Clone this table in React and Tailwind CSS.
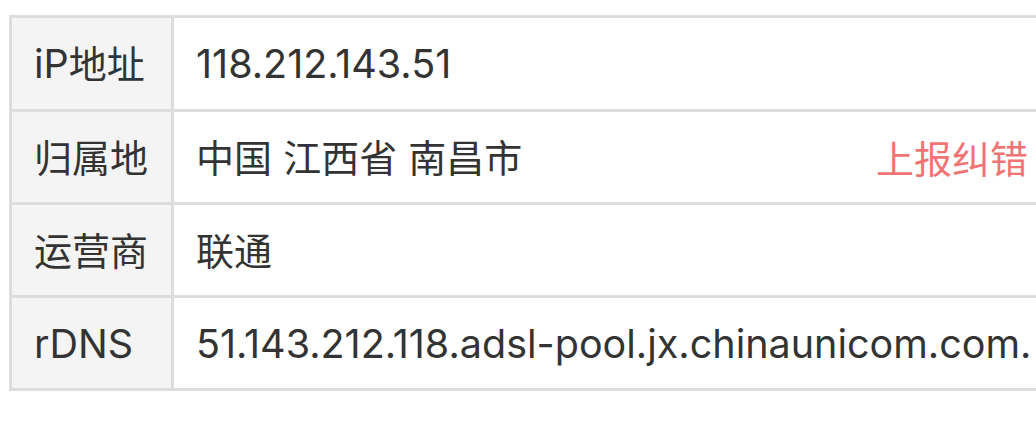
function Mixed({ text }) {
  const parts = text.match(/[\u3000-\u9fff]+|[^\u3000-\u9fff]+/g) || [];
  return (
    <>
      {parts.map((p, i) =>
        /[\u3000-\u9fff]/.test(p) ? (
          <span key={i} className="text-[38px]">
            {p}
          </span>
        ) : (
          <span key={i}>{p}</span>
        )
      )}
    </>
  );
}

export default function App() {
  const rows = [
    { label: "iP地址", value: "118.212.143.51" },
    { label: "归属地", value: "中国 江西省 南昌市", link: "上报纠错" },
    { label: "运营商", value: "联通" },
    { label: "rDNS", value: "51.143.212.118.adsl-pool.jx.chinaunicom.com." },
  ];
  return (
    <div
      className="w-[1036px] h-[432px] overflow-hidden bg-white pl-[9px] pt-[15px] text-[#333]"
      style={{ fontFamily: 'Inter, "Noto Sans CJK SC", sans-serif' }}
    >
      <div className="w-[1044px] border-[3px] border-[#dddddd]">
        {rows.map((r, i) => (
          <div
            key={i}
            className={
              "flex " + (i > 0 ? "h-[93px] border-t-[3px] border-[#dddddd]" : "h-[91px]")
            }
          >
            <div className="w-[162px] shrink-0 border-r-[3px] border-[#dddddd] bg-[#f4f4f4] flex items-center pl-[22px] pt-[3px] text-[39.5px] leading-none whitespace-nowrap">
              <span>
                <Mixed text={r.label} />
              </span>
            </div>
            <div className="flex-1 min-w-0 overflow-hidden flex items-center justify-between pl-[22px] pr-[22px] pt-[3px] text-[39.5px] leading-none whitespace-nowrap">
              <span>
                <Mixed text={r.value} />
              </span>
              {r.link && <span className="text-[#f07474] text-[38px]">{r.link}</span>}
            </div>
          </div>
        ))}
      </div>
    </div>
  );
}
